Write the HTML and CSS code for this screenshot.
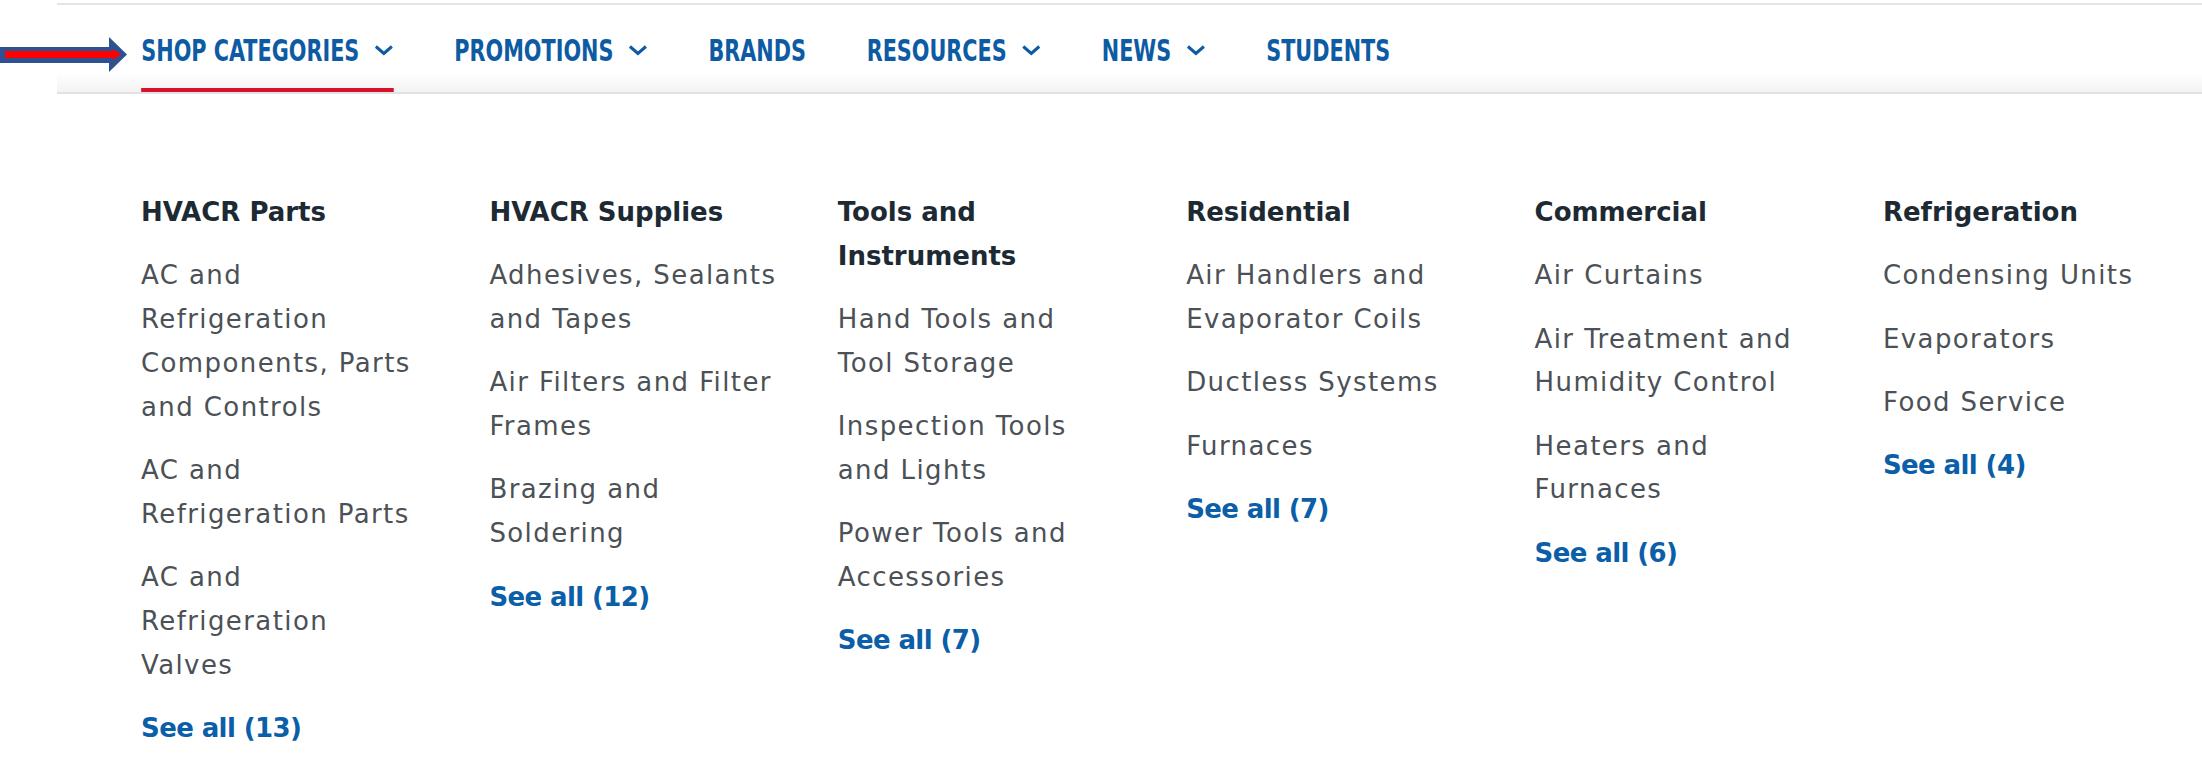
FILE: index.html
```html
<!DOCTYPE html>
<html lang="en">
<head>
    <meta charset="UTF-8">
    <meta name="viewport" content="width=device-width, initial-scale=1.0">
    <title>Shop Categories</title>
    <link rel="stylesheet" href="styles.css">
</head>
<body>
    <!-- annotation arrow pointing at the open menu -->
    <svg class="pointer" width="128" height="36" viewBox="0 0 128 36">
        <polygon points="0,10 109,10 109,0 127,17.5 109,35 109,26 0,26" fill="#2f5192"/>
        <polygon points="5,14 113,14 113,12 121,17.5 113,23 113,21 5,21" fill="#ff0000"/>
    </svg>

    <nav class="main-nav">
        <ul>
            <li class="active">
                <a href="#">SHOP CATEGORIES<svg class="chevron" width="25.5" height="12" viewBox="0 0 19 12" preserveAspectRatio="none"><polyline points="1.5,2.5 9.5,9.5 17.5,2.5"/></svg></a>
            </li>
            <li>
                <a href="#">PROMOTIONS<svg class="chevron" width="25.5" height="12" viewBox="0 0 19 12" preserveAspectRatio="none"><polyline points="1.5,2.5 9.5,9.5 17.5,2.5"/></svg></a>
            </li>
            <li><a href="#">BRANDS</a></li>
            <li>
                <a href="#">RESOURCES<svg class="chevron" width="25.5" height="12" viewBox="0 0 19 12" preserveAspectRatio="none"><polyline points="1.5,2.5 9.5,9.5 17.5,2.5"/></svg></a>
            </li>
            <li>
                <a href="#">NEWS<svg class="chevron" width="25.5" height="12" viewBox="0 0 19 12" preserveAspectRatio="none"><polyline points="1.5,2.5 9.5,9.5 17.5,2.5"/></svg></a>
            </li>
            <li><a href="#">STUDENTS</a></li>
        </ul>
    </nav>

    <div class="mega-menu">
        <div class="menu-col">
            <h3>HVACR Parts</h3>
            <ul>
                <li><a href="#">AC and<br>Refrigeration<br>Components, Parts<br>and Controls</a></li>
                <li><a href="#">AC and<br>Refrigeration Parts</a></li>
                <li><a href="#">AC and<br>Refrigeration<br>Valves</a></li>
                <li class="see-all"><a href="#">See all (13)</a></li>
            </ul>
        </div>
        <div class="menu-col">
            <h3>HVACR Supplies</h3>
            <ul>
                <li><a href="#">Adhesives, Sealants<br>and Tapes</a></li>
                <li><a href="#">Air Filters and Filter<br>Frames</a></li>
                <li><a href="#">Brazing and<br>Soldering</a></li>
                <li class="see-all"><a href="#">See all (12)</a></li>
            </ul>
        </div>
        <div class="menu-col">
            <h3>Tools and<br>Instruments</h3>
            <ul>
                <li><a href="#">Hand Tools and<br>Tool Storage</a></li>
                <li><a href="#">Inspection Tools<br>and Lights</a></li>
                <li><a href="#">Power Tools and<br>Accessories</a></li>
                <li class="see-all"><a href="#">See all (7)</a></li>
            </ul>
        </div>
        <div class="menu-col">
            <h3>Residential</h3>
            <ul>
                <li><a href="#">Air Handlers and<br>Evaporator Coils</a></li>
                <li><a href="#">Ductless Systems</a></li>
                <li><a href="#">Furnaces</a></li>
                <li class="see-all"><a href="#">See all (7)</a></li>
            </ul>
        </div>
        <div class="menu-col">
            <h3>Commercial</h3>
            <ul>
                <li><a href="#">Air Curtains</a></li>
                <li><a href="#">Air Treatment and<br>Humidity Control</a></li>
                <li><a href="#">Heaters and<br>Furnaces</a></li>
                <li class="see-all"><a href="#">See all (6)</a></li>
            </ul>
        </div>
        <div class="menu-col">
            <h3>Refrigeration</h3>
            <ul>
                <li><a href="#">Condensing Units</a></li>
                <li><a href="#">Evaporators</a></li>
                <li><a href="#">Food Service</a></li>
                <li class="see-all"><a href="#">See all (4)</a></li>
            </ul>
        </div>
    </div>
</body>
</html>
```

FILE: styles.css
```css
body {
    margin: 0;
    background: #fff;
    font-family: "DejaVu Sans", sans-serif;
}
.pointer {
    position: absolute;
    left: 0;
    top: 37px;
}

/* top navigation bar */
.main-nav {
    margin: 3px 0 0 57px;
    border-top: 2px solid #e5e5e5;
    border-bottom: 2px solid #e2e2e2;
    background: linear-gradient(to bottom, #fff 78%, #f3f3f3);
}
/* labels are a tall condensed face: squeeze the row horizontally */
.main-nav ul {
    display: flex;
    gap: 81.5px;
    height: 87px;
    margin: 0;
    padding: 0 0 0 113.2px;
    list-style: none;
    transform: scaleX(0.745);
    transform-origin: 0 0;
}
.main-nav li {
    display: flex;
    align-items: center;
    padding-top: 7px;
    border-bottom: 4px solid transparent;
}
.main-nav li.active {
    border-bottom-color: #d7102e;
}
.main-nav a {
    display: flex;
    align-items: center;
    color: #0d5ba3;
    font-family: "Liberation Sans Narrow", "DejaVu Sans Condensed", sans-serif;
    font-stretch: condensed;
    font-weight: bold;
    font-size: 31px;
    text-decoration: none;
    white-space: nowrap;
}
.chevron {
    margin-left: 20.5px;
}
.chevron polyline {
    fill: none;
    stroke: #0d5ba3;
    stroke-width: 3;
}

/* dropdown columns */
.mega-menu {
    display: grid;
    grid-template-columns: repeat(6, 286px);
    column-gap: 62.4px;
    align-items: start;
    padding: 97px 0 0 141px;
}
.menu-col h3 {
    margin: 0;
    font-size: 26px;
    line-height: 43.8px;
    font-weight: bold;
    color: #1d2a33;
    white-space: nowrap;
}
.menu-col ul {
    list-style: none;
    margin: 0;
    padding: 0;
}
.menu-col li {
    margin-top: 19.5px;
    font-size: 26px;
    line-height: 43.8px;
    letter-spacing: 1.4px;
    white-space: nowrap;
}
.menu-col li a {
    color: #4b5156;
    text-decoration: none;
}
.menu-col li.see-all a {
    color: #0b5ea8;
    font-weight: bold;
    letter-spacing: -0.6px;
}
```
